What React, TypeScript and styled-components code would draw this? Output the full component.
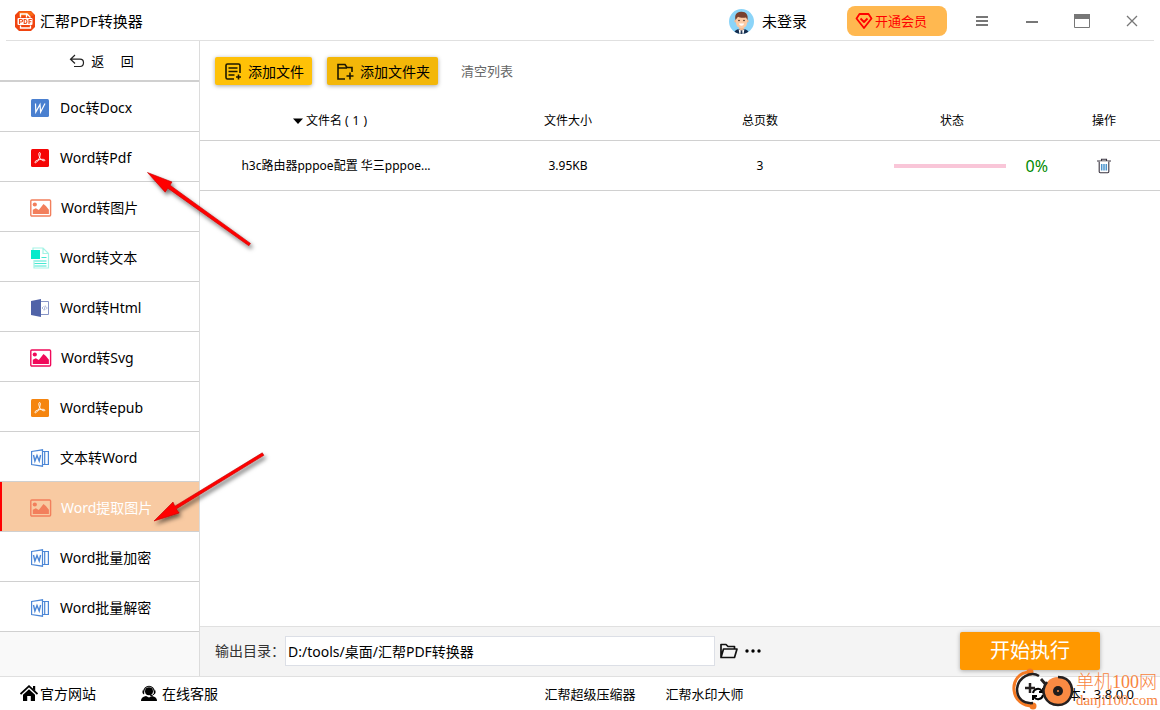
import React from 'react';
import styled, { createGlobalStyle } from 'styled-components';

const GlobalStyle = createGlobalStyle`
  * { box-sizing: border-box; }
  body {
    margin: 0;
    background: #fff;
    color: #000;
    font-family: "Noto Sans", "Noto Sans CJK SC", sans-serif;
    font-size: 14px;
    line-height: 20px;
  }
  button, input { font: inherit; color: inherit; }
  button { border: 0; padding: 0; background: none; cursor: pointer; white-space: nowrap; }
  a { color: inherit; text-decoration: none; }
  svg { display: block; flex: none; }
`;

const Window = styled.div`
  position: relative;
  display: flex;
  flex-direction: column;
  min-height: 100vh;
  overflow: hidden;
`;

const TitleBar = styled.header`
  display: flex;
  align-items: center;
  height: 41px;
  margin: 0 6px;
  padding: 2px 0 0 8px;
  border-bottom: 1px solid #e0e0e0;
`;

const Brand = styled.h1`
  display: flex;
  align-items: center;
  gap: 4px;
  margin: 0 auto 0 0;
  font-size: 15px;
  font-weight: 400;
`;

const Account = styled.button`
  display: flex;
  align-items: center;
  gap: 8px;
  margin-right: 40px;
  font-size: 15px;
`;

const VipButton = styled.button`
  display: flex;
  align-items: center;
  gap: 2px;
  width: 100px;
  height: 30px;
  margin-right: 10px;
  padding-left: 8px;
  border-radius: 8px;
  background: #ffb850;
  color: #f00;
  font-size: 13px;
`;

const WindowButton = styled.button`
  display: grid;
  place-items: center;
  width: 50px;
  height: 38px;
  color: #777;
  &:last-child { margin-right: -3px; }
`;

const Body = styled.div`
  display: flex;
  flex: 1;
`;

const Sidebar = styled.nav`
  width: 200px;
  flex: none;
  border-right: 1px solid #dcdcdc;
  background: #f9f9f9;
`;

const BackButton = styled.button`
  display: flex;
  align-items: center;
  justify-content: center;
  gap: 6px;
  width: 100%;
  height: 41px;
  padding-left: 4px;
  border-bottom: 2px solid #d0d0d0;
  background: #fff;
  font-size: 13px;
  white-space: pre;
`;

const MenuItem = styled.button<{ $active?: boolean }>`
  display: flex;
  align-items: center;
  gap: 9px;
  width: 100%;
  height: 50px;
  padding: 2px 0 0 29px;
  border-bottom: 1px solid #d0d0d0;
  box-shadow: ${p => (p.$active ? 'inset 2px 0 #f00' : 'none')};
  background: ${p => (p.$active ? '#f8caa2' : '#fff')};
  color: ${p => (p.$active ? '#fff' : '#000')};
`;

const Main = styled.main`
  display: flex;
  flex: 1;
  flex-direction: column;
  min-width: 0;
`;

const Toolbar = styled.div`
  display: flex;
  align-items: center;
  gap: 15px;
  height: 60px;
  padding: 0 15px;
`;

const AddButton = styled.button<{ $tone: string }>`
  display: flex;
  align-items: center;
  gap: 6px;
  height: 28px;
  padding: 1px 8px 0 9px;
  border-radius: 2px;
  background: ${p => p.$tone};
  box-shadow: 0 1px 4px rgba(0, 0, 0, 0.35);
`;

const ClearButton = styled.button`
  margin-left: 8px;
  color: #666;
  font-size: 13px;
`;

const FileTable = styled.table`
  width: 100%;
  table-layout: fixed;
  border-collapse: separate;
  border-spacing: 0;
  font-size: 12px;
  th, td {
    padding: 0;
    border-bottom: 1px solid #d0d0d0;
    text-align: center;
    font-weight: 400;
    white-space: nowrap;
  }
  th { height: 40px; }
  td { height: 50px; }
`;

const Column = styled.col<{ $width?: string }>`
  width: ${p => p.$width ?? 'auto'};
`;

const NameHeading = styled.span`
  display: inline-flex;
  align-items: center;
  gap: 3px;
  margin-right: 12px;
`;

const StatusCell = styled.div`
  display: flex;
  align-items: center;
  justify-content: flex-end;
  gap: 20px;
`;

const Track = styled.div`
  width: 112px;
  height: 4px;
  background: #f9c6d8;
`;

const Percent = styled.span`
  color: #008a00;
  font-size: 16px;
`;

const IconButton = styled.button`
  display: grid;
  place-items: center;
  margin: 0 auto;
`;

const OutputBar = styled.div`
  display: flex;
  align-items: center;
  gap: 5px;
  height: 50px;
  margin-top: auto;
  padding: 0 60px 2px 15px;
  border-top: 1px solid #e0e0e0;
  background: #f4f4f4;
`;

const PathLabel = styled.label`
  width: 65px;
  color: #333;
  white-space: nowrap;
`;

const PathInput = styled.input`
  flex: 0 1 430px;
  min-width: 0;
  height: 30px;
  padding: 0 2px;
  border: 1px solid #dcdfe6;
  background: #fff;
  outline: none;
`;

const StartButton = styled.button`
  width: 140px;
  height: 38px;
  margin-left: auto;
  border-radius: 2px;
  background: #ff9800;
  box-shadow: 0 1px 4px rgba(0, 0, 0, 0.3);
  color: #fff;
  font-size: 20px;
`;

const Footer = styled.footer`
  display: grid;
  grid-template-columns: 250px 1fr 116px;
  align-items: center;
  height: 34px;
  padding: 0 26px 0 20px;
  border-top: 1px solid #e0e0e0;
`;

const FooterGroup = styled.div<{ $gap: number; $align: string }>`
  display: flex;
  gap: ${p => p.$gap}px;
  justify-content: ${p => p.$align};
  font-size: 13px;
  white-space: nowrap;
`;

const SupportLink = styled.a`
  display: flex;
  align-items: center;
  gap: 2px;
  font-size: 14px;
`;

const Version = styled.span`
  display: flex;
  align-items: center;
  gap: 10px;
`;

const Annotations = styled.svg`
  position: absolute;
  top: 0;
  left: 0;
  pointer-events: none;
`;

const Watermark = styled.div`
  position: absolute;
  right: 2px;
  bottom: -2px;
  display: flex;
  align-items: center;
  gap: 1px;
  color: #f7853f;
  pointer-events: none;
`;

const WatermarkText = styled.div`
  display: flex;
  flex-direction: column;
  font-family: "Liberation Serif", "Noto Sans CJK SC", serif;
  font-size: 18px;
  font-weight: 300;
  line-height: 20px;
`;

const WatermarkUrl = styled.span`
  font-size: 15px;
  line-height: 16px;
`;

type IconKind = 'doc' | 'pdf' | 'epub' | 'image' | 'svg' | 'text' | 'html' | 'word';

const Picture = ({ color }: { color: string }) => (
  <svg width="23" height="18" viewBox="0 0 23 18">
    <rect x="1.8" y="1" width="19.8" height="16" rx="1" fill="none" stroke={color} strokeWidth="1.4" />
    <circle cx="5.8" cy="5.5" r="2.1" fill={color} />
    <path d="M3.8 15v-4.2l3-1.5 3 1.7 4.7-6 2.4 2 3 3.7V15z" fill={color} />
  </svg>
);

const Acrobat = ({ color }: { color: string }) => (
  <svg width="22" height="18" viewBox="0 0 22 18">
    <rect x="2" width="18" height="18" rx="1.5" fill={color} />
    <path
      d="M10.400 3.500c1.300-.2 1.200 1.800.4 4.300-.9 2.600-2.900 6-4.500 6-1.600-.6.600-2.400 3.900-3.100 3.100-.7 5.700-.5 5.700.6-.2 1.200-2.700.5-4.500-1.700-1.500-1.800-2.200-5.700-1-6.100z"
      fill="none"
      stroke="#fff"
      strokeWidth=".9"
    />
  </svg>
);

const MenuIcon = ({ kind }: { kind: IconKind }) => {
  switch (kind) {
    case 'pdf': return <Acrobat color="#f50505" />;
    case 'epub': return <Acrobat color="#f5850f" />;
    case 'image': return <Picture color="#f27f5c" />;
    case 'svg': return <Picture color="#f00a5a" />;
    case 'doc':
      return (
        <svg width="22" height="18" viewBox="0 0 22 18">
          <rect x="2" width="18" height="18" rx="1.5" fill="#4a80d0" />
          <path d="M6.500 4.500L6.800 13 11 5.500 11.600 13 16 4.500" fill="none" stroke="#fff" strokeWidth="1.200" />
        </svg>
      );
    case 'text':
      return (
        <svg width="22" height="22" viewBox="0 0 22 22">
          <path d="M4 4V1h10l5.500 5.500V21H5v-8M14 1v5.500h5.500" fill="none" stroke="#a5f3e5" strokeWidth="1.2" />
          <path d="M2 3h9v9H2z" fill="#06eacb" />
          <path d="M12.500 10.500h5M5.500 14h12M5.500 16.500h12M5.500 19h12" stroke="#46e8d2" strokeWidth="1.2" />
        </svg>
      );
    case 'html':
      return (
        <svg width="22" height="18" viewBox="0 0 22 18">
          <path d="M2 2l10-2v18L2 16z" fill="#5063a8" />
          <path d="M12 2.500h7.500v13H12" fill="#fff" stroke="#8795c6" />
          <path d="M14.500 7.500L13 9l1.500 1.500M16.800 7.500L18.300 9l-1.500 1.500M16.300 6.500l-1.200 5" fill="none" stroke="#8795c6" strokeWidth=".7" />
        </svg>
      );
    default:
      return (
        <svg width="22" height="18" viewBox="0 0 22 18" fill="none" stroke="#4b86d6" strokeWidth="1.2">
          <path d="M2.600 2.500L13.500.8v16.400L2.600 15.500zM13.500 2.500h2.200v13h-2.200M15.700 2.500h3.700v13h-3.700" />
          <path d="M4.500 6l1.400 6L8 6.500l2.200 5.500L11.600 6" strokeWidth="1.400" />
        </svg>
      );
  }
};

const LogoIcon = () => (
  <svg width="22" height="22" viewBox="0 0 22 22">
    <path d="M5 1h12l4 4v12l-4 4H5l-4-4V5z" fill="#f04410" />
    <path d="M5 1.500h12l3 4-15 1z" fill="#fa6b13" />
    <path d="M6.500 7.500V4H13l3.500 3.500M6.500 15.500v2.500h10v-2.500M12.500 4v3.500" fill="none" stroke="#fff" strokeWidth="1.300" />
    <rect x="3.500" y="8" width="15" height="7" rx="1" fill="#fff" />
    <path d="M5.500 14V9.500h1.700q1.400 0 1.400 1.200T7.200 12H5.500M10.200 9.500v4h1q1.800 0 1.800-2t-1.800-2zM15 14V9.500h2.800M15 11.700h2.300" fill="none" stroke="#ee4b18" strokeWidth="1.100" />
  </svg>
);

const AvatarIcon = () => (
  <svg width="25" height="25" viewBox="0 0 25 25">
    <defs><clipPath id="avatar"><circle cx="12.5" cy="12.5" r="12.5" /></clipPath></defs>
    <g clipPath="url(#avatar)">
      <path fill="#8bd4f8" d="M0 0h25v25H0z" />
      <path fill="#f3b991" d="M10 16h5v6h-5z" />
      <path fill="#152d4e" d="M5 25c.2-3.500 2.400-4.500 5-5l2.500 2 2.500-2c2.600.5 4.800 1.500 5 5z" />
      <path fill="#fff" d="M9.600 20l2.900 2 2.900-2-.8 5h-4.200z" />
      <path fill="#263c5a" d="M11.800 21.500h1.400l.4 3.500h-2.200z" />
      <circle cx="6.8" cy="12" r="1.5" fill="#f3b991" /><circle cx="18.2" cy="12" r="1.5" fill="#f3b991" />
      <path fill="#fdcaa3" d="M7 8h11v6c0 3-2.500 5.200-5.500 5.200S7 17 7 14z" />
      <path fill="#78402e" d="M6.500 11C5.500 6 7 3 12 2.700c5-.3 7.500 2.800 6.500 8.300L17 8.500c-3 .5-6 .3-8-.8z" />
      <circle cx="10" cy="11.500" r=".8" fill="#3b2a24" /><circle cx="15" cy="11.500" r=".8" fill="#3b2a24" />
      <path d="M9.800 14.600h5.400q-.7 2.200-2.700 2.200t-2.700-2.200z" fill="#fff" />
    </g>
  </svg>
);

const DiamondIcon = () => (
  <svg width="18" height="18" viewBox="0 0 18 18" fill="none" stroke="#f00" strokeWidth="1.8" strokeLinejoin="round">
    <path d="M4.500 2h9l3 4.500L9 16 1.500 6.500z" />
    <path d="M5.500 6.500L9 10l3.500-3.500" />
  </svg>
);

const AddFileIcon = () => (
  <svg width="18" height="18" viewBox="0 0 18 18" fill="none" stroke="#1c1700" strokeWidth="1.6">
    <path d="M10 16H3.500Q2 16 2 14.500v-12Q2 1 3.500 1h11Q16 1 16 2.500V10M4.500 5h9M4.500 8.500h9M4.500 12h6M14.500 11.500v5M12 14h5" />
  </svg>
);

const AddFolderIcon = () => (
  <svg width="18" height="18" viewBox="0 0 18 18" fill="none" stroke="#1c1700" strokeWidth="1.600">
    <path d="M9 16H2V1.500h7l2 3h5V9M2 5h9M14 9.500v7M10.500 13h7" />
  </svg>
);

const TrashIcon = () => (
  <svg width="14" height="16" viewBox="0 0 14 16" fill="none" stroke="#3a3440">
    <path d="M4.500 2.500V1.200h5v1.300M0 3h14" strokeWidth="1.100" />
    <path d="M2.200 3.500v10.300q0 .9 1 .9h7.600q1 0 1-.9V3.500" fill="#fff" strokeWidth="1.100" />
    <path d="M4.700 6v6.500M7 6v6.500M9.300 6v6.500" stroke="#4b94cd" strokeWidth="1.500" />
  </svg>
);

const FolderIcon = () => (
  <svg width="18" height="16" viewBox="0 0 18 16" fill="none" stroke="#111" strokeWidth="1.700" strokeLinejoin="round">
    <path d="M1 14.500V1.500h5l2 2h6.500V6M1 14.500L3.500 6H17l-2.500 8.500z" />
  </svg>
);

const HomeIcon = () => (
  <svg width="18" height="17" viewBox="0 0 18 17">
    <path d="M0.500 9L9 1.200 17.500 9" fill="none" stroke="#000" strokeWidth="1.800" />
    <path d="M13 1h2.200v5L13 4zM9 4.200l6 5.500V16h-4.200v-5H7.200v5H3V9.700z" />
  </svg>
);

const AgentIcon = () => (
  <svg width="20" height="17" viewBox="0 0 20 17">
    <path d="M3.800 6.500a5.200 5.200 0 0 1 10.400 0" fill="none" stroke="#000" strokeWidth="1.100" />
    <circle cx="9" cy="6.300" r="4" />
    <path d="M2.500 5.500h1.700v3.800H3.500Q2 8 2.500 5.500zM13.800 5.500h1.700Q16 8 14.500 9.300h-.7zM1 16q-.2-4 5-5l3 1.500 3-1.500q5.200 1 5 5z" />
    <path d="M14.500 8.500q-1.500 2.300-4.500 2.300" fill="none" stroke="#000" />
  </svg>
);

const MENU: { label: string; icon: IconKind; active?: boolean }[] = [
  { label: 'Doc转Docx', icon: 'doc' },
  { label: 'Word转Pdf', icon: 'pdf' },
  { label: 'Word转图片', icon: 'image' },
  { label: 'Word转文本', icon: 'text' },
  { label: 'Word转Html', icon: 'html' },
  { label: 'Word转Svg', icon: 'svg' },
  { label: 'Word转epub', icon: 'epub' },
  { label: '文本转Word', icon: 'word' },
  { label: 'Word提取图片', icon: 'image', active: true },
  { label: 'Word批量加密', icon: 'word' },
  { label: 'Word批量解密', icon: 'word' },
];

export default function App() {
  return (
    <Window>
      <GlobalStyle />
      <TitleBar>
        <Brand><LogoIcon />汇帮PDF转换器</Brand>
        <Account><AvatarIcon />未登录</Account>
        <VipButton><DiamondIcon />开通会员</VipButton>
        <WindowButton aria-label="菜单">
          <svg width="12" height="12" viewBox="0 0 12 12" stroke="currentColor" strokeWidth="1.8"><path d="M0 2h12M0 6h12M0 10h12" /></svg>
        </WindowButton>
        <WindowButton aria-label="最小化">
          <svg width="12" height="12" viewBox="0 0 12 12" stroke="currentColor" strokeWidth="2"><path d="M0 7h12" /></svg>
        </WindowButton>
        <WindowButton aria-label="最大化">
          <svg width="16" height="14" viewBox="0 0 16 14" fill="none" stroke="currentColor"><path d="M.5 .5h15v13H.5z" /><path d="M0 2.500h16" strokeWidth="5" /></svg>
        </WindowButton>
        <WindowButton aria-label="关闭">
          <svg width="12" height="12" viewBox="0 0 12 12" stroke="currentColor" strokeWidth="1.3"><path d="M1 1l10 10M11 1L1 11" /></svg>
        </WindowButton>
      </TitleBar>

      <Body>
        <Sidebar>
          <BackButton>
            <svg width="16" height="14" viewBox="0 0 16 14" fill="none" stroke="#222" strokeWidth="1.2">
              <path d="M6 1L1.500 5.200 6 9.500M1.500 5.200H11q3.500 0 3.500 3.600T11 12.500H5" />
            </svg>
            {'返\u2003 回'}
          </BackButton>
          {MENU.map(item => (
            <MenuItem key={item.label} $active={item.active}>
              <MenuIcon kind={item.icon} />
              {item.label}
            </MenuItem>
          ))}
        </Sidebar>

        <Main>
          <Toolbar>
            <AddButton $tone="#ffc107"><AddFileIcon />添加文件</AddButton>
            <AddButton $tone="#f3b709"><AddFolderIcon />添加文件夹</AddButton>
            <ClearButton>清空列表</ClearButton>
          </Toolbar>

          <FileTable>
            <colgroup>
              <Column />
              <Column $width="20%" />
              <Column $width="20%" />
              <Column $width="20%" />
              <Column $width="112px" />
            </colgroup>
            <thead>
              <tr>
                <th>
                  <NameHeading>
                    <svg width="10" height="6" viewBox="0 0 10 6"><path d="M0 .5h10L5 6z" /></svg>
                    {'文件名 (\u20041\u2004)'}
                  </NameHeading>
                </th>
                <th>文件大小</th>
                <th>总页数</th>
                <th>状态</th>
                <th>操作</th>
              </tr>
            </thead>
            <tbody>
              <tr>
                <td>h3c路由器pppoe配置 华三pppoe...</td>
                <td>3.95KB</td>
                <td>3</td>
                <td><StatusCell><Track /><Percent>0%</Percent></StatusCell></td>
                <td><IconButton aria-label="删除"><TrashIcon /></IconButton></td>
              </tr>
            </tbody>
          </FileTable>

          <OutputBar>
            <PathLabel htmlFor="output-path">输出目录：</PathLabel>
            <PathInput id="output-path" defaultValue="D:/tools/桌面/汇帮PDF转换器" />
            <button aria-label="打开目录"><FolderIcon /></button>
            <button aria-label="更多">
              <svg width="20" height="6" viewBox="0 0 20 6"><circle cx="4" cy="3" r="1.7" /><circle cx="10" cy="3" r="1.7" /><circle cx="16" cy="3" r="1.7" /></svg>
            </button>
            <StartButton>开始执行</StartButton>
          </OutputBar>
        </Main>
      </Body>

      <Footer>
        <FooterGroup $gap={44} $align="flex-start">
          <SupportLink href="#site"><HomeIcon />官方网站</SupportLink>
          <SupportLink href="#support"><AgentIcon />在线客服</SupportLink>
        </FooterGroup>
        <FooterGroup $gap={30} $align="center">
          <a href="#compress">汇帮超级压缩器</a>
          <a href="#watermark">汇帮水印大师</a>
        </FooterGroup>
        <FooterGroup $gap={0} $align="flex-end">
          <Version>
            <svg width="14" height="14" viewBox="0 0 14 14" fill="none" stroke="#000" strokeWidth="2">
              <path d="M2 6a5 5 0 0 1 9-2M12 8a5 5 0 0 1-9 2" /><path d="M12 1v4H8M2 13V9h4" />
            </svg>
            版本：3.8.0.0
          </Version>
        </FooterGroup>
      </Footer>

      <Watermark>
        <svg width="64" height="44" viewBox="0 0 64 44" fill="none">
          <path d="M19 4C8 4 2 13 3 22c1 10 9 16 19 16" stroke="#f47a24" strokeWidth="3" />
          <circle cx="19" cy="4" r="3.5" fill="#f47a24" /><circle cx="22" cy="38" r="3.5" fill="#f47a24" />
          <path d="M28 8C20 3 7 9 6 21c0 10 7 15 16 14M14 20h10M19 15v10" stroke="#252020" strokeWidth="2.5" />
          <path d="M30 11l6 7M35 19l7-7" stroke="#252020" strokeWidth="2.800" />
          <circle cx="47" cy="23" r="14" fill="#f98a43" />
          <path d="M36 14C28 24 35 37 47 37s16-12 13-20c-2-5-7-8-13-8" stroke="#252020" strokeWidth="2.600" />
          <circle cx="47" cy="23" r="5" fill="#201c1c" /><circle cx="47" cy="23" r="1" fill="#f98a43" />
        </svg>
        <WatermarkText>
          单机100网
          <WatermarkUrl>danji100.com</WatermarkUrl>
        </WatermarkText>
      </Watermark>

      <Annotations width="280" height="540" viewBox="0 0 280 540">
        <defs>
          <filter id="arrow-shadow" x="-20%" y="-20%" width="140%" height="150%">
            <feDropShadow dx="2" dy="3" stdDeviation="2" floodColor="#000" floodOpacity=".55" />
          </filter>
        </defs>
        <g filter="url(#arrow-shadow)" fill="#f00" stroke="#c00000" strokeWidth=".6">
          <path d="M147.500 172.500L172 182l-2 3.200 80.500 58.200-1.700 2.400-81-57.600-2.600 4z" />
          <path d="M154 521l19-19 1.800 4.200 87.500-53.400 1.600 2.500-87.700 53.700 3 4z" />
        </g>
      </Annotations>
    </Window>
  );
}
